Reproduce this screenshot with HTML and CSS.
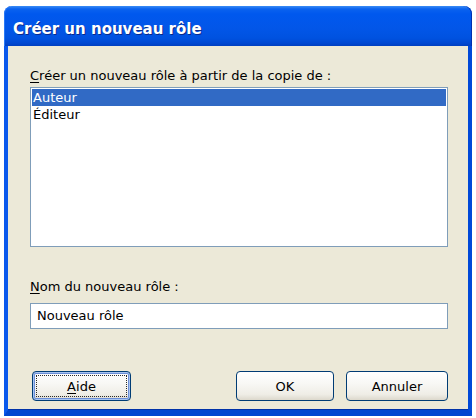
FILE: index.html
```html
<!DOCTYPE html>
<html lang="fr">
<head>
<meta charset="utf-8">
<title>Créer un nouveau rôle</title>
<link rel="stylesheet" href="styles.css">
</head>
<body>
<div class="window">
  <div class="titlebar"><span class="title">Créer un nouveau rôle</span></div>
  <div class="frame">
    <div class="content">
      <div class="label"><u>C</u>réer un nouveau rôle à partir de la copie de :</div>
      <div class="listbox">
        <div class="item selected">Auteur</div>
        <div class="item">Éditeur</div>
      </div>
      <div class="label label-name"><u>N</u>om du nouveau rôle :</div>
      <div class="textbox">Nouveau rôle</div>
      <div class="buttons">
        <div class="btn btn-help focused"><span class="focus"><u>A</u>ide</span></div>
        <div class="spacer"></div>
        <div class="btn btn-ok"><span>OK</span></div>
        <div class="btn btn-cancel"><span>Annuler</span></div>
      </div>
    </div>
  </div>
</div>
</body>
</html>
```

FILE: styles.css
```css
html, body {
  margin: 0;
  padding: 0;
  background: #ffffff;
}
body {
  width: 476px;
  height: 418px;
  overflow: hidden;
  font-family: "DejaVu Sans", "Liberation Sans", sans-serif;
}
.window {
  margin: 6px 0 0 4px;
  width: 468px;
  height: 410px;
  display: flex;
  flex-direction: column;
}
.titlebar {
  height: 40px;
  border-radius: 8px 8px 0 0;
  background: linear-gradient(to bottom,
    #3b8cf5 0px, #0a62ef 3px, #0058ee 8px, #0256e8 22px, #0052e0 32px, #0048d2 37px, #003fc0 40px);
  box-shadow: inset 1px 0 0 #2a78f5, inset -1px 0 0 #0030b0;
  display: flex;
  align-items: center;
  padding-left: 9px;
  box-sizing: border-box;
}
.title {
  color: #ffffff;
  font-family: "DejaVu Sans", sans-serif;
  font-weight: bold;
  font-size: 15px;
  letter-spacing: 0;
  text-shadow: 1px 1px 0 #0a2a8a;
  margin-top: 5px;
}
.frame {
  flex: 1;
  background: #ece9d8;
  border-left: 4px solid #0a58ec;
  border-right: 4px solid #0048d8;
  border-bottom: 6px solid #0046d0;
  box-shadow: inset 0 -1px 0 #0032a8;
  display: flex;
  flex-direction: column;
}
.content {
  padding: 22px 20px 0 22px;
  display: flex;
  flex-direction: column;
  font-size: 13px;
  color: #000000;
}
.label {
  height: 16px;
  line-height: 16px;
}
.listbox {
  margin-top: 3px;
  height: 156px;
  border: 1px solid #7f9db9;
  background: #ffffff;
  padding: 1px;
}
.item {
  height: 17px;
  line-height: 18px;
  padding-left: 1px;
}
.item.selected {
  background: #316ac5;
  color: #ffffff;
}
.label-name {
  margin-top: 32px;
}
.textbox {
  margin-top: 8px;
  height: 24px;
  line-height: 24px;
  border: 1px solid #7f9db9;
  background: #ffffff;
  padding-left: 6px;
}
.buttons {
  margin-top: 42px;
  display: flex;
  height: 30px;
}
.spacer {
  flex: 1;
}
.btn {
  box-sizing: border-box;
  height: 30px;
  border: 1px solid #003c74;
  border-radius: 4px;
  background: linear-gradient(to bottom, #ffffff 0%, #f8f8f5 40%, #efede6 80%, #dcd8cc 100%);
  display: flex;
  align-items: center;
  justify-content: center;
}
.btn-help {
  width: 99px;
  margin-left: 2px;
  box-shadow: inset 0 0 0 1px #a8c4f0, inset 0 0 0 2px #6b8fd8;
}
.btn-ok {
  width: 98px;
}
.btn-cancel {
  width: 102px;
  margin-left: 12px;
}
.focus {
  display: flex;
  align-items: center;
  justify-content: center;
  width: 91px;
  height: 22px;
  border: 1px dotted #2a2a2a;
  box-sizing: border-box;
}
u {
  text-decoration: underline;
  text-underline-offset: 2px;
}
```
